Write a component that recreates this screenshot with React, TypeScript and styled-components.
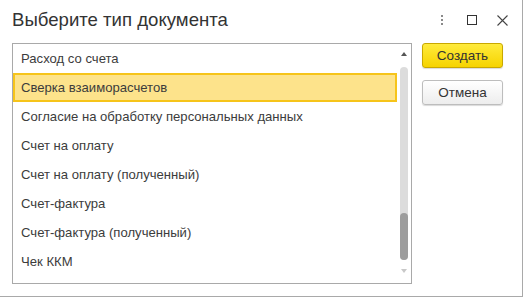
import * as React from "react";
import styled, { createGlobalStyle } from "styled-components";

const Global = createGlobalStyle`
  html, body {
    margin: 0;
    padding: 0;
    background: #ffffff;
  }
  body {
    font-family: "Liberation Sans", Arial, sans-serif;
    color: #333333;
  }
`;

const Window = styled.div`
  box-sizing: border-box;
  width: 523px;
  height: 297px;
  background: #ffffff;
  border-right: 1px solid #a9a9a9;
  border-bottom: 1px solid #a9a9a9;
  display: flex;
  flex-direction: column;
`;

const Header = styled.div`
  height: 43px;
  display: flex;
  align-items: flex-start;
  padding: 8px 0 0 12px;
  box-sizing: border-box;
`;

const Title = styled.h1`
  margin: 0;
  flex: 1;
  font-size: 18.6px;
  font-weight: normal;
  line-height: 24px;
  color: #333333;
`;

const Tools = styled.div`
  display: flex;
  align-items: center;
  height: 22px;
  margin-top: 1px;
  padding-right: 7px;
`;

const ToolButton = styled.div<{ $w: number }>`
  width: ${(p) => p.$w}px;
  height: 22px;
  display: flex;
  align-items: center;
  justify-content: center;
`;

const Body = styled.div`
  display: flex;
  padding: 0 0 0 12px;
  gap: 10px;
`;

const ListBox = styled.div`
  box-sizing: border-box;
  width: 400px;
  height: 241px;
  border: 1px solid #a9a9a9;
  display: flex;
`;

const Rows = styled.div`
  flex: 1;
  display: flex;
  flex-direction: column;
`;

const Row = styled.div<{ $selected?: boolean }>`
  box-sizing: border-box;
  height: 29px;
  display: flex;
  align-items: center;
  padding-left: ${(p) => (p.$selected ? 6 : 8)}px;
  font-size: 13.1px;
  color: #3c3c3c;
  white-space: nowrap;
  overflow: hidden;
  background: ${(p) => (p.$selected ? "#fde38b" : "transparent")};
  border: ${(p) => (p.$selected ? "2px solid #f6c41a" : "none")};
`;

const Scroll = styled.div`
  width: 14px;
  display: flex;
  flex-direction: column;
  align-items: center;
  padding-top: 8px;
  box-sizing: border-box;
`;

const Track = styled.div`
  width: 8px;
  height: 193px;
  margin-top: 11px;
  border-radius: 4px;
  background: #dcdcdc;
  display: flex;
  flex-direction: column;
  justify-content: flex-end;
`;

const Thumb = styled.div`
  height: 47px;
  border-radius: 4px;
  background: #9d9d9d;
`;

const Arrow = styled.div<{ $down?: boolean }>`
  width: 0;
  height: 0;
  border-left: 3.5px solid transparent;
  border-right: 3.5px solid transparent;
  ${(p) =>
    p.$down
      ? "border-top: 4px solid #c8c8c8; margin-top: 9px;"
      : "border-bottom: 4px solid #555555;"}
`;

const Buttons = styled.div`
  display: flex;
  flex-direction: column;
  gap: 12px;
`;

const Button = styled.button<{ $primary?: boolean }>`
  box-sizing: border-box;
  width: 81px;
  height: 25px;
  padding: 0;
  border-radius: 3px;
  font-family: "Liberation Sans", Arial, sans-serif;
  font-size: 13.5px;
  color: #333333;
  cursor: pointer;
  border: 1px solid ${(p) => (p.$primary ? "#c9a800" : "#bdbdbd")};
  background: ${(p) =>
    p.$primary
      ? "linear-gradient(#ffeb3c, #f6d300)"
      : "linear-gradient(#ffffff, #ededed)"};
  box-shadow: 0 1px 1px rgba(0, 0, 0, 0.15);
`;

const items = [
  "Расход со счета",
  "Сверка взаиморасчетов",
  "Согласие на обработку персональных данных",
  "Счет на оплату",
  "Счет на оплату (полученный)",
  "Счет-фактура",
  "Счет-фактура (полученный)",
  "Чек ККМ",
];

const App: React.FC = () => {
  return (
    <>
      <Global />
      <Window>
        <Header>
          <Title>Выберите тип документа</Title>
          <Tools>
            <ToolButton $w={25}>
              <svg width="4" height="10" viewBox="0 0 4 10">
                <rect x="1" y="0" width="2" height="2" fill="#8a8a8a" />
                <rect x="1" y="4" width="2" height="2" fill="#8a8a8a" />
                <rect x="1" y="8" width="2" height="2" fill="#8a8a8a" />
              </svg>
            </ToolButton>
            <ToolButton $w={35}>
              <svg width="10" height="10" viewBox="0 0 10 10">
                <rect x="0.5" y="0.5" width="9" height="9" fill="none" stroke="#333" strokeWidth="1" />
              </svg>
            </ToolButton>
            <ToolButton $w={26}>
              <svg width="11" height="11" viewBox="0 0 11 11">
                <path d="M0.5 0.5 L10.5 10.5 M10.5 0.5 L0.5 10.5" stroke="#444" strokeWidth="1.1" />
              </svg>
            </ToolButton>
          </Tools>
        </Header>
        <Body>
          <ListBox>
            <Rows>
              {items.map((t, i) => (
                <Row key={t} $selected={i === 1}>
                  {t}
                </Row>
              ))}
            </Rows>
            <Scroll>
              <Arrow />
              <Track>
                <Thumb />
              </Track>
              <Arrow $down />
            </Scroll>
          </ListBox>
          <Buttons>
            <Button $primary>Создать</Button>
            <Button>Отмена</Button>
          </Buttons>
        </Body>
      </Window>
    </>
  );
};

export default App;
